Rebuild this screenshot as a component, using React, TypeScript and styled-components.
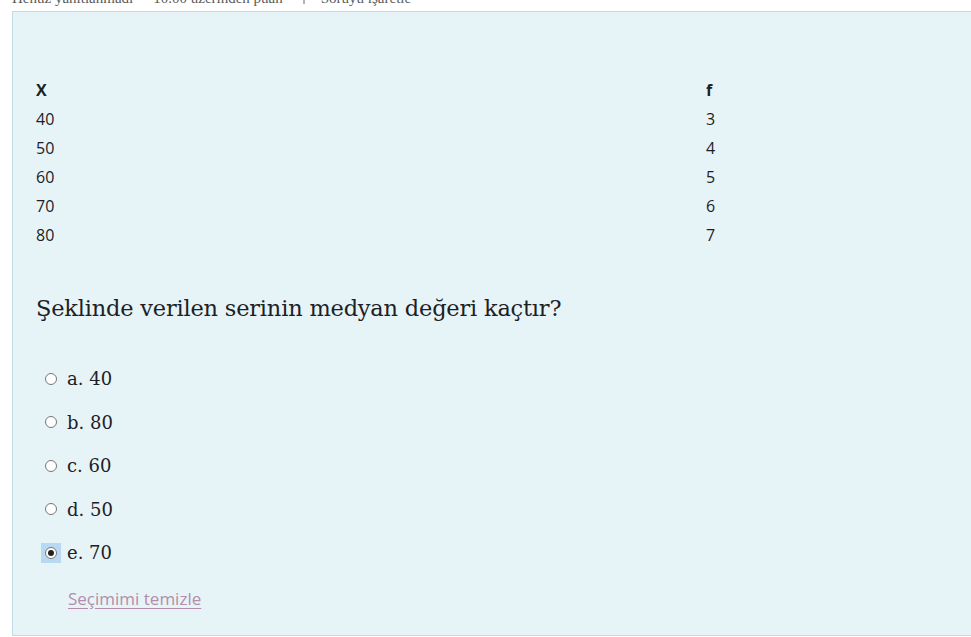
import React from "react";
import styled, { createGlobalStyle } from "styled-components";

const Global = createGlobalStyle`
  html, body { margin: 0; padding: 0; background: #ffffff; }
  body { font-family: "Open Sans", "Noto Sans", sans-serif; color: #1d2125; }
`;

const Page = styled.div`
  padding-left: 12px;
  width: 971px;
  height: 637px;
  box-sizing: border-box;
  overflow: hidden;
`;

const Info = styled.div`
  height: 11px;
  box-sizing: border-box;
  padding-bottom: 5px;
  display: flex;
  align-items: flex-end;
  overflow: hidden;
  gap: 20px;
  font-family: "Liberation Serif", serif;
  font-size: 15px;
  line-height: 16px;
  color: #5a5a5a;
  white-space: nowrap;
`;

const Flag = styled.span`
  display: inline-flex;
  align-items: center;
  gap: 8px;
`;

const Panel = styled.div`
  background: #e7f4f7;
  border: 1px solid #bfdde3;
  border-right: none;
  height: 625px;
  box-sizing: border-box;
  padding: 64px 0 0 23px;
`;

const Table = styled.div`
  display: grid;
  grid-template-columns: 670px auto;
  font-size: 16px;
  line-height: 29px;
  color: #1d2125;
`;

const Head = styled.div`
  font-weight: 700;
`;

const Cell = styled.div``;

const Question = styled.p`
  margin: 43px 0 0 0;
  font-family: "DejaVu Serif", serif;
  font-size: 22.5px;
  line-height: 30px;
  color: #1d2125;
  letter-spacing: -0.2px;
`;

const Answers = styled.div`
  margin-top: 41px;
  display: flex;
  flex-direction: column;
  gap: 14px;
`;

const Option = styled.label`
  display: flex;
  align-items: center;
  height: 29.5px;
  font-family: "DejaVu Serif", serif;
  font-size: 18px;
  color: #1d2125;
`;

const RadioBox = styled.span<{ $focus?: boolean }>`
  width: 20px;
  height: 20px;
  margin-left: 5px;
  margin-right: 6px;
  display: flex;
  align-items: center;
  justify-content: center;
  background: ${(p) => (p.$focus ? "#b9d9f3" : "transparent")};
`;

const Radio = styled.span<{ $checked?: boolean }>`
  width: 12px;
  height: 12px;
  box-sizing: border-box;
  border-radius: 50%;
  border: 1px solid #767676;
  background: #fff;
  display: flex;
  align-items: center;
  justify-content: center;
  &::after {
    content: "";
    width: 6px;
    height: 6px;
    border-radius: 50%;
    background: ${(p) => (p.$checked ? "#222" : "transparent")};
  }
`;

const Clear = styled.a`
  display: inline-block;
  margin: 19px 0 0 32px;
  font-size: 17px;
  color: #b38dab;
  text-decoration: underline;
  text-underline-offset: 3px;
  cursor: pointer;
`;

const rows: [string, string][] = [
  ["40", "3"],
  ["50", "4"],
  ["60", "5"],
  ["70", "6"],
  ["80", "7"],
];

const options = [
  { k: "a", v: "40" },
  { k: "b", v: "80" },
  { k: "c", v: "60" },
  { k: "d", v: "50" },
  { k: "e", v: "70", checked: true },
];

export default function App() {
  return (
    <>
      <Global />
      <Page>
        <Info>
          <span>Henüz yanıtlanmadı</span>
          <span>10.00 üzerinden puan</span>
          <Flag>
            <svg width="10" height="14" viewBox="0 0 10 14">
              <path d="M1 1v12M1 1h7l-2 3 2 3H1" fill="none" stroke="#666" strokeWidth="1" />
            </svg>
            Soruyu işaretle
          </Flag>
        </Info>
        <Panel>
          <Table>
            <Head>X</Head>
            <Head>f</Head>
            {rows.map(([x, f]) => (
              <React.Fragment key={x}>
                <Cell>{x}</Cell>
                <Cell>{f}</Cell>
              </React.Fragment>
            ))}
          </Table>
          <Question>Şeklinde verilen serinin medyan değeri kaçtır?</Question>
          <Answers>
            {options.map((o) => (
              <Option key={o.k}>
                <RadioBox $focus={o.checked}>
                  <Radio $checked={o.checked} />
                </RadioBox>
                {o.k}. {o.v}
              </Option>
            ))}
          </Answers>
          <Clear>Seçimimi temizle</Clear>
        </Panel>
      </Page>
    </>
  );
}
